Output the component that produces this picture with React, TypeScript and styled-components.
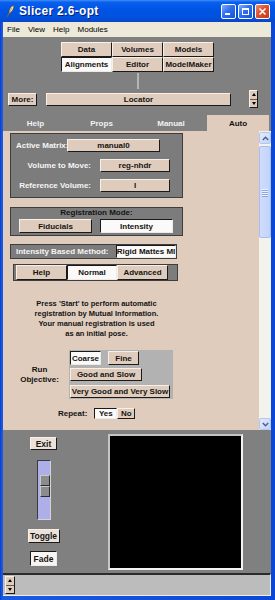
import React from 'react';
import styled, { createGlobalStyle } from 'styled-components';

const BEIGE = '#dfccbc';
const GREY = '#808080';
const FONT = '"Liberation Sans", Arial, sans-serif';

const GlobalStyle = createGlobalStyle`
  html, body { margin: 0; padding: 0; background: #ffffff; }
  body { font-family: ${FONT}; }
  * { box-sizing: border-box; }
`;

const Window = styled.div`
  width: 275px;
  height: 600px;
  display: flex;
  flex-direction: column;
  background: linear-gradient(to right, #0a3cc8 0px, #1a5ae2 2px, #0b47d6 100%);
  overflow: hidden;
`;

const TitleBar = styled.div`
  height: 22px;
  flex: none;
  display: flex;
  align-items: center;
  padding: 0 5px 0 6px;
  background: linear-gradient(to bottom, #3d8ef8 0%, #0a5fef 10%, #0054e3 45%, #0052de 80%, #0b45c4 100%);
`;

const TitleText = styled.span`
  margin-left: 4px;
  color: #ffffff;
  font: bold 12px ${FONT};
  letter-spacing: 0.3px;
  text-shadow: 1px 1px 0 #0a1e7a;
  white-space: nowrap;
`;

const TitleButtons = styled.div`
  margin-left: auto;
  display: flex;
  gap: 2px;
`;

const TitleBtn = styled.div<{ $close?: boolean }>`
  width: 15px;
  height: 15px;
  border: 1px solid #ffffff;
  border-radius: 2px;
  display: flex;
  align-items: center;
  justify-content: center;
  background: ${p =>
    p.$close
      ? 'linear-gradient(135deg, #f08a6c 0%, #e0502e 45%, #c23a1a 100%)'
      : 'linear-gradient(135deg, #7fb0ff 0%, #2f6ff0 45%, #1a52d4 100%)'};
`;

const Body = styled.div`
  flex: 1;
  display: flex;
  flex-direction: column;
  margin: 0 4px 4px 3px;
`;

const MenuBar = styled.div`
  height: 15px;
  flex: none;
  display: flex;
  align-items: center;
  background: #ece9d8;
`;

const MenuItem = styled.span`
  padding: 0 4px;
  font: 8px ${FONT};
  color: #000000;
`;

const Main = styled.div`
  flex: 1;
  display: flex;
  flex-direction: column;
  background: ${GREY};
`;

const ModuleGrid = styled.div`
  margin: 5px 0 0 58px;
  display: grid;
  grid-template-columns: repeat(3, 51px);
  grid-template-rows: repeat(2, 15px);
`;

const Btn = styled.div<{ $w: number; $h: number; $on?: boolean }>`
  width: ${p => p.$w}px;
  height: ${p => p.$h}px;
  flex: none;
  display: flex;
  align-items: center;
  justify-content: center;
  font: bold 8px ${FONT};
  color: #141414;
  white-space: nowrap;
  background: ${p => (p.$on ? '#fbfaf8' : BEIGE)};
  border: 1px solid;
  border-color: ${p =>
    p.$on ? '#1a1a1a #ecebea #ecebea #1a1a1a' : '#f7f0e8 #1a1a1a #1a1a1a #f7f0e8'};
`;

const Separator = styled.div`
  margin: 1px 0 0 134px;
  width: 2px;
  height: 16px;
  background: #b4b4b4;
`;

const MoreRow = styled.div`
  margin-top: 1px;
  height: 18px;
  display: flex;
  align-items: center;
  padding-left: 5px;
`;

const Spinner = styled.div<{ $w: number; $h: number; $ml: number }>`
  width: ${p => p.$w}px;
  height: ${p => p.$h}px;
  margin-left: ${p => p.$ml}px;
  flex: none;
  display: flex;
  flex-direction: column;
  background: ${BEIGE};
  border: 1px solid;
  border-color: #f7f0e8 #1a1a1a #1a1a1a #f7f0e8;
`;

const SpinHalf = styled.div<{ $down?: boolean }>`
  flex: 1;
  display: flex;
  align-items: center;
  justify-content: center;
  border-top: ${p => (p.$down ? '1px solid #6a5a4a' : 'none')};
  &::after {
    content: '';
    width: 0;
    height: 0;
    border-left: 2.5px solid transparent;
    border-right: 2.5px solid transparent;
    ${p => (p.$down ? 'border-top: 3px solid #000;' : 'border-bottom: 3px solid #000;')}
  }
`;

const TabRow = styled.div`
  margin-top: 7px;
  height: 16px;
  display: grid;
  grid-template-columns: 65px 67px 72px 62px;
`;

const Tab = styled.div<{ $active?: boolean }>`
  display: flex;
  align-items: center;
  justify-content: center;
  font: bold 8px ${FONT};
  color: ${p => (p.$active ? '#141414' : '#f2f2f2')};
  background: ${p => (p.$active ? BEIGE : 'transparent')};
`;

const Content = styled.div`
  height: 299px;
  flex: none;
  display: flex;
`;

const Pane = styled.div`
  flex: 1;
  background: ${BEIGE};
  padding: 2px 0 0 7px;
`;

const Column = styled.div`
  width: 173px;
  display: flex;
  flex-direction: column;
`;

const Panel = styled.div<{ $w: number; $mt: number; $ml?: number }>`
  width: ${p => p.$w}px;
  margin-top: ${p => p.$mt}px;
  margin-left: ${p => p.$ml ?? 0}px;
  background: #7c7c7c;
  border: 1px solid #3e3e3e;
  display: flex;
  flex-direction: column;
`;

const FieldStack = styled.div`
  display: flex;
  flex-direction: column;
  gap: 7px;
  padding: 5px 0;
`;

const FieldRow = styled.div<{ $gap: number; $pl: number }>`
  display: flex;
  align-items: center;
  gap: ${p => p.$gap}px;
  padding-left: ${p => p.$pl}px;
`;

const PanelLabel = styled.span<{ $w?: number; $right?: boolean; $dark?: boolean }>`
  ${p => (p.$w ? `width: ${p.$w}px;` : '')}
  flex: none;
  text-align: ${p => (p.$right ? 'right' : 'left')};
  font: bold 8px ${FONT};
  color: ${p => (p.$dark ? '#141414' : '#f6f6f6')};
  white-space: nowrap;
`;

const PanelTitle = styled.div`
  height: 10px;
  line-height: 10px;
  text-align: center;
  font: bold 8px ${FONT};
  color: #141414;
`;

const ButtonPair = styled.div`
  display: flex;
  gap: 8px;
  padding: 1px 0 2px 8px;
`;

const InlinePanel = styled.div`
  height: 13px;
  display: flex;
  align-items: center;
  padding-left: 5px;
  & > :last-child {
    margin-left: auto;
  }
`;

const ButtonStrip = styled.div`
  display: flex;
  padding-left: 2px;
`;

const Paragraph = styled.div`
  margin-top: 18px;
  text-align: center;
  font: bold 7.5px ${FONT};
  line-height: 10px;
  color: #141414;
`;

const RunRow = styled.div`
  margin-top: 11px;
  display: flex;
  align-items: center;
`;

const RunLabel = styled.div`
  width: 59px;
  text-align: center;
  font: bold 8px ${FONT};
  line-height: 10px;
  color: #141414;
`;

const RunPanel = styled.div`
  width: 104px;
  height: 49px;
  padding: 1px;
  background: #b2b2b2;
  display: flex;
  flex-direction: column;
`;

const RunLine = styled.div<{ $mt: number }>`
  display: flex;
  gap: 7px;
  margin-top: ${p => p.$mt}px;
`;

const RepeatRow = styled.div`
  margin-top: 9px;
  display: flex;
  align-items: center;
  padding-left: 48px;
  gap: 7px;
`;

const Pair = styled.div`
  display: flex;
`;

const ScrollBar = styled.div`
  width: 12px;
  flex: none;
  display: flex;
  flex-direction: column;
  background: #f4f2ec;
  padding-top: 1px;
`;

const ScrollBtn = styled.div`
  height: 12px;
  flex: none;
  border: 1px solid #b3c6f0;
  border-radius: 2px;
  background: linear-gradient(135deg, #e2ebfe 0%, #c3d4fb 100%);
  display: flex;
  align-items: center;
  justify-content: center;
`;

const ScrollThumb = styled.div`
  margin-top: 2px;
  height: 92px;
  flex: none;
  border: 1px solid #a9bdf0;
  border-radius: 2px;
  background: linear-gradient(to right, #cfdcfd 0%, #c2d3fc 100%);
  display: flex;
  flex-direction: column;
  align-items: center;
  justify-content: center;
  gap: 1px;
`;

const Grip = styled.div`
  width: 6px;
  height: 1px;
  background: #eef3ff;
  box-shadow: 0 1px 0 #8ca6e0;
`;

const ScrollSpace = styled.div`
  flex: 1;
`;

const Bottom = styled.div`
  height: 143px;
  flex: none;
  display: flex;
  background: ${GREY};
`;

const ToolCol = styled.div`
  width: 81px;
  flex: none;
  display: flex;
  flex-direction: column;
  align-items: center;
  padding-top: 7px;
`;

const ToolBtn = styled(Btn)<{ $mt: number }>`
  margin-top: ${p => p.$mt}px;
  font-size: 8.5px;
  background: ${p => (p.$on ? '#f8f4f2' : '#ece0d8')};
`;

const Slider = styled.div`
  margin-top: 10px;
  width: 14px;
  height: 60px;
  background: #aeaee8;
  border: 1px solid;
  border-color: #3c3c3c #d4d4d4 #d4d4d4 #3c3c3c;
  padding: 14px 0 0 2px;
`;

const SliderThumb = styled.div`
  width: 10px;
  display: flex;
  flex-direction: column;
`;

const ThumbCell = styled.div`
  height: 11px;
  background: #8c8c8c;
  border: 1px solid;
  border-color: #c8c8c8 #2e2e2e #2e2e2e #c8c8c8;
`;

const Viewer = styled.div`
  margin: 4px 0 0 24px;
  width: 135px;
  height: 136px;
  background: #000000;
  border: 2px solid;
  border-color: #c4c4c4 #f4f4f4 #f4f4f4 #c4c4c4;
`;

const StatusBar = styled.div`
  height: 23px;
  flex: none;
  border-top: 2px solid #2b2b2b;
  border-right: 1px solid #eeeeee;
  border-bottom: 1px solid #eeeeee;
  background: #bcbcbc;
  display: flex;
  align-items: center;
`;

const Quill = () => (
  <svg width="9" height="13" viewBox="0 0 9 13">
    <path d="M1 12 L3 8 C3 4 5 1 8 0.5 C8 4 6 7 3.5 8.5 Z" fill="#f6f0dc" stroke="#5a4a2a" strokeWidth="0.8" />
    <path d="M1 12 L6 3" stroke="#8a7040" strokeWidth="0.6" />
  </svg>
);

const Chevron = ({ down }: { down?: boolean }) => (
  <svg width="7" height="5" viewBox="0 0 7 5">
    <path
      d={down ? 'M0.8 1 L3.5 3.8 L6.2 1' : 'M0.8 4 L3.5 1.2 L6.2 4'}
      fill="none"
      stroke="#4d6185"
      strokeWidth="1.4"
    />
  </svg>
);

const SpinBox = ({ w, h, ml }: { w: number; h: number; ml: number }) => (
  <Spinner $w={w} $h={h} $ml={ml}>
    <SpinHalf />
    <SpinHalf $down />
  </Spinner>
);

export default function App() {
  return (
    <>
      <GlobalStyle />
      <Window>
        <TitleBar>
          <Quill />
          <TitleText>Slicer 2.6-opt</TitleText>
          <TitleButtons>
            <TitleBtn>
              <svg width="11" height="11" viewBox="0 0 11 11">
                <rect x="2" y="7" width="5" height="2" fill="#fff" />
              </svg>
            </TitleBtn>
            <TitleBtn>
              <svg width="11" height="11" viewBox="0 0 11 11">
                <rect x="2.5" y="2.5" width="6" height="6" fill="none" stroke="#fff" strokeWidth="1" />
                <rect x="2" y="2" width="7" height="2" fill="#fff" />
              </svg>
            </TitleBtn>
            <TitleBtn $close>
              <svg width="11" height="11" viewBox="0 0 11 11">
                <path d="M2.5 2.5 L8.5 8.5 M8.5 2.5 L2.5 8.5" stroke="#fff" strokeWidth="1.6" />
              </svg>
            </TitleBtn>
          </TitleButtons>
        </TitleBar>
        <Body>
          <MenuBar>
            <MenuItem>File</MenuItem>
            <MenuItem>View</MenuItem>
            <MenuItem>Help</MenuItem>
            <MenuItem>Modules</MenuItem>
          </MenuBar>
          <Main>
            <ModuleGrid>
              <Btn $w={51} $h={15}>Data</Btn>
              <Btn $w={51} $h={15}>Volumes</Btn>
              <Btn $w={51} $h={15}>Models</Btn>
              <Btn $w={51} $h={15} $on>Alignments</Btn>
              <Btn $w={51} $h={15}>Editor</Btn>
              <Btn $w={51} $h={15}>ModelMaker</Btn>
            </ModuleGrid>
            <Separator />
            <MoreRow>
              <Btn $w={29} $h={13}>More:</Btn>
              <Btn $w={185} $h={13} style={{ marginLeft: 9 }}>Locator</Btn>
              <SpinBox w={9} h={18} ml={18} />
            </MoreRow>
            <TabRow>
              <Tab>Help</Tab>
              <Tab>Props</Tab>
              <Tab>Manual</Tab>
              <Tab $active>Auto</Tab>
            </TabRow>
            <Content>
              <Pane>
                <Column>
                  <Panel $w={173} $mt={0}>
                    <FieldStack>
                      <FieldRow $gap={0} $pl={5}>
                        <PanelLabel $w={51}>Active Matrix:</PanelLabel>
                        <Btn $w={93} $h={13}>manual0</Btn>
                      </FieldRow>
                      <FieldRow $gap={9} $pl={0}>
                        <PanelLabel $w={80} $right>Volume to Move:</PanelLabel>
                        <Btn $w={70} $h={13}>reg-nhdr</Btn>
                      </FieldRow>
                      <FieldRow $gap={9} $pl={0}>
                        <PanelLabel $w={80} $right>Reference Volume:</PanelLabel>
                        <Btn $w={70} $h={13}>I</Btn>
                      </FieldRow>
                    </FieldStack>
                  </Panel>
                  <Panel $w={173} $mt={9}>
                    <PanelTitle>Registration Mode:</PanelTitle>
                    <ButtonPair>
                      <Btn $w={73} $h={14}>Fiducials</Btn>
                      <Btn $w={73} $h={14} $on>Intensity</Btn>
                    </ButtonPair>
                  </Panel>
                  <Panel $w={167} $mt={8}>
                    <InlinePanel>
                      <PanelLabel>Intensity Based Method:</PanelLabel>
                      <Btn $w={60} $h={13} $on>Rigid Mattes MI</Btn>
                    </InlinePanel>
                  </Panel>
                  <Panel $w={165} $mt={5} $ml={3}>
                    <ButtonStrip>
                      <Btn $w={51} $h={15}>Help</Btn>
                      <Btn $w={50} $h={15} $on>Normal</Btn>
                      <Btn $w={51} $h={15}>Advanced</Btn>
                    </ButtonStrip>
                  </Panel>
                  <Paragraph>
                    Press 'Start' to perform automatic
                    <br />
                    registration by Mutual Information.
                    <br />
                    Your manual registration is used
                    <br />
                    as an initial pose.
                  </Paragraph>
                  <RunRow>
                    <RunLabel>
                      Run
                      <br />
                      Objective:
                    </RunLabel>
                    <RunPanel>
                      <RunLine $mt={0}>
                        <Btn $w={31} $h={14} $on>Coarse</Btn>
                        <Btn $w={31} $h={14}>Fine</Btn>
                      </RunLine>
                      <RunLine $mt={3}>
                        <Btn $w={72} $h={13}>Good and Slow</Btn>
                      </RunLine>
                      <RunLine $mt={4}>
                        <Btn $w={100} $h={13}>Very Good and Very Slow</Btn>
                      </RunLine>
                    </RunPanel>
                  </RunRow>
                  <RepeatRow>
                    <PanelLabel $dark>Repeat:</PanelLabel>
                    <Pair>
                      <Btn $w={23} $h={11} $on>Yes</Btn>
                      <Btn $w={18} $h={11}>No</Btn>
                    </Pair>
                  </RepeatRow>
                </Column>
              </Pane>
              <ScrollBar>
                <ScrollBtn>
                  <Chevron />
                </ScrollBtn>
                <ScrollThumb>
                  <Grip />
                  <Grip />
                  <Grip />
                  <Grip />
                </ScrollThumb>
                <ScrollSpace />
                <ScrollBtn>
                  <Chevron down />
                </ScrollBtn>
              </ScrollBar>
            </Content>
            <Bottom>
              <ToolCol>
                <ToolBtn $w={27} $h={13} $mt={0}>Exit</ToolBtn>
                <Slider>
                  <SliderThumb>
                    <ThumbCell />
                    <ThumbCell />
                  </SliderThumb>
                </Slider>
                <ToolBtn $w={32} $h={14} $mt={9}>Toggle</ToolBtn>
                <ToolBtn $w={27} $h={15} $mt={8} $on>Fade</ToolBtn>
              </ToolCol>
              <Viewer />
            </Bottom>
          </Main>
          <StatusBar>
            <SpinBox w={10} h={18} ml={2} />
          </StatusBar>
        </Body>
      </Window>
    </>
  );
}
